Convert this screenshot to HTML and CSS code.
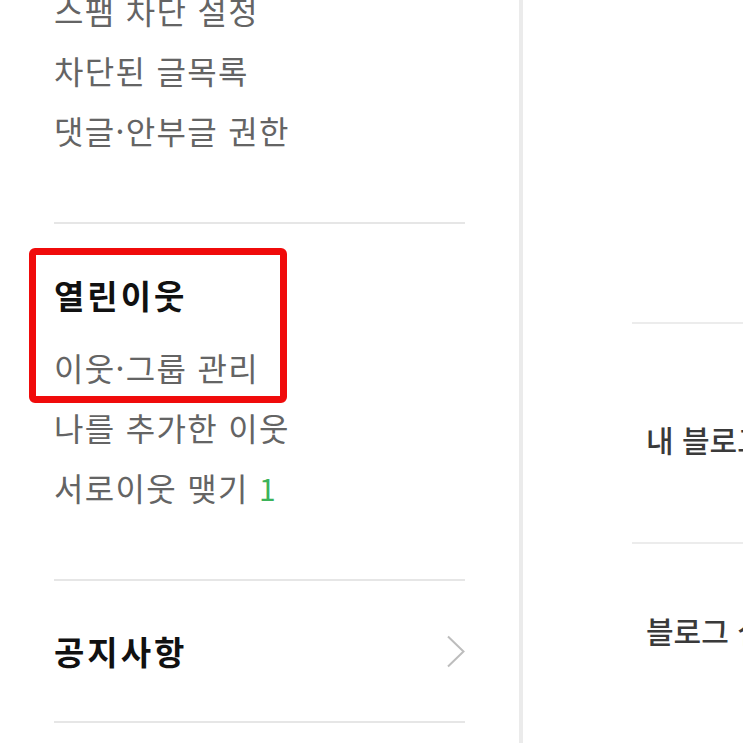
FILE: index.html
```html
<!DOCTYPE html>
<html lang="ko">
<head>
  <meta charset="UTF-8" />
  <meta name="viewport" content="width=device-width, initial-scale=1.0"/>
  <title>블로그 메뉴</title>
  <link rel="stylesheet" href="styles.css">
</head>
<body>

  <div class="screen">
    <div class="menu-panel">
      <div class="menu-group first-group">
        <a href="#" class="menu-item">스팸 차단 설정</a>
        <a href="#" class="menu-item">차단된 글목록</a>
        <a href="#" class="menu-item">댓글·안부글 권한</a>
      </div>

      <div class="menu-group">
        <div class="group-title">열린이웃</div>
        <a href="#" class="menu-item">이웃·그룹 관리</a>
        <a href="#" class="menu-item">나를 추가한 이웃</a>
        <a href="#" class="menu-item">서로이웃 맺기 <span class="count">1</span></a>
      </div>

      <a href="#" class="notice-row">
        <span>공지사항</span>
        <svg class="chevron" width="20" height="33" viewBox="0 0 20 33">
          <polyline points="2,1.5 17.5,16.5 2,31.5" fill="none" stroke="#bdbdbd" stroke-width="2"/>
        </svg>
      </a>

      <div class="highlight-box"></div>
    </div>

    <div class="side-panel">
      <div class="side-list">
        <div class="side-row">내 블로그 관리</div>
        <div class="side-row">블로그 설정</div>
      </div>
    </div>
  </div>

</body>
</html>
```

FILE: styles.css
```css
body {
  margin: 0;
  background-color: #fff;
  font-family: "Noto Sans CJK KR", "Noto Sans", sans-serif;
  overflow: hidden;
}

a {
  text-decoration: none;
}

.screen {
  display: flex;
  height: 743px;
  overflow: hidden;
}

.menu-panel {
  position: relative;
  width: 465px;
  padding-left: 54px;
  flex-shrink: 0;
  border-right: 4px solid #ebebeb;
}

.menu-group {
  width: 411px;
  padding: 41px 0 62px;
  border-bottom: 2px solid #e6e6e6;
}

.first-group {
  margin-top: -20px;
  padding-top: 0;
}

.menu-item {
  display: block;
  height: 60px;
  line-height: 60px;
  font-size: 32px;
  letter-spacing: 1.3px;
  color: #646464;
  white-space: nowrap;
}

.group-title {
  height: 60px;
  line-height: 60px;
  margin-bottom: 12px;
  font-size: 33px;
  letter-spacing: 3px;
  font-weight: bold;
  color: #111;
}

.count {
  color: #3cb35a;
  font-size: 30px;
}

.notice-row {
  display: flex;
  align-items: center;
  justify-content: space-between;
  width: 411px;
  height: 140px;
  border-bottom: 2px solid #e6e6e6;
  font-size: 33px;
  letter-spacing: 3px;
  font-weight: bold;
  color: #111;
}

.chevron {
  margin-right: -1px;
}

.highlight-box {
  position: absolute;
  top: 248px;
  left: 29px;
  width: 258px;
  height: 155px;
  box-sizing: border-box;
  border: 7px solid #f00b0b;
  border-radius: 6px;
}

.side-panel {
  flex: 1;
  overflow: hidden;
  padding-top: 322px;
}

.side-list {
  margin-left: 109px;
}

.side-row {
  border-top: 2px solid #ececec;
  padding: 95px 0 83px 14px;
  line-height: 40px;
  font-size: 30px;
  font-weight: 500;
  color: #3a3a3a;
  white-space: nowrap;
}

.side-row + .side-row {
  padding-top: 66px;
}
```
